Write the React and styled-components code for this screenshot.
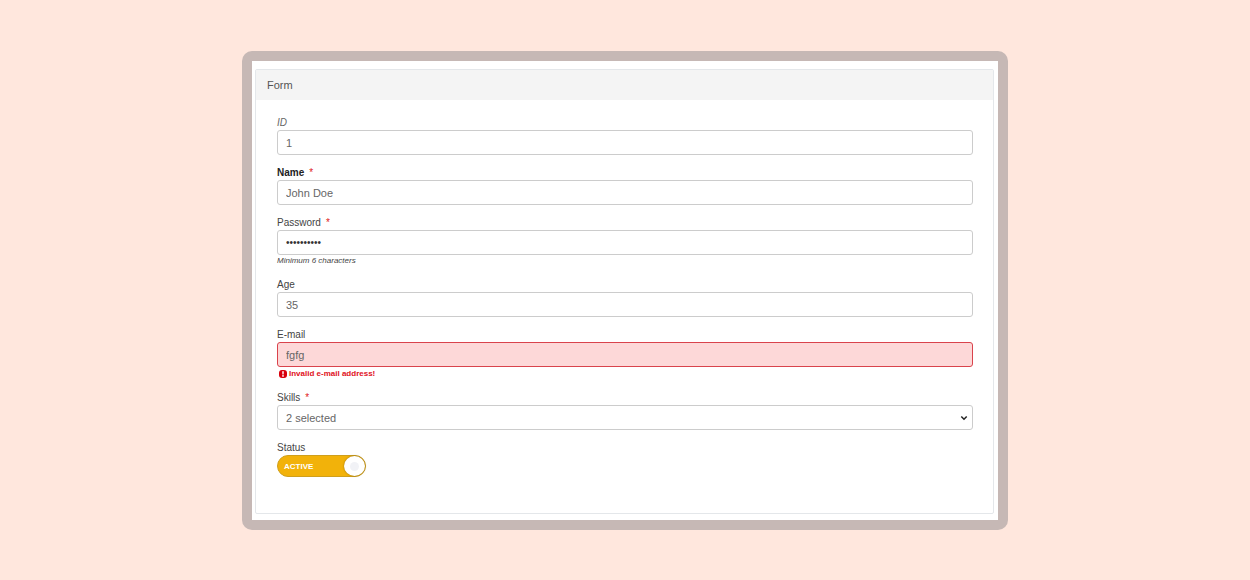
import React, { useState } from "react";
import styled, { createGlobalStyle, css } from "styled-components";

const GlobalStyle = createGlobalStyle`
  * {
    box-sizing: border-box;
  }

  body {
    margin: 0;
    background-color: #ffe7dd;
    font-family: "Liberation Sans", Arial, sans-serif;
    color: #555;
  }
`;

const Page = styled.main`
  min-height: 100vh;
  padding: 51px 20px 50px;
`;

const Frame = styled.div`
  max-width: 766px;
  margin: 0 auto;
  border-radius: 10px;
  padding: 10px;
  background-color: #c6b8b5;
`;

const Sheet = styled.div`
  padding: 8px 4px 6px 3px;
  background-color: #fff;
`;

const Panel = styled.section`
  border: 1px solid #e4e7ea;
  border-radius: 2px;
`;

const PanelTitle = styled.h1`
  margin: 0;
  padding: 0 11px;
  font-size: 11px;
  font-weight: 400;
  line-height: 30px;
  background-color: #f4f4f4;
`;

const FormBody = styled.form`
  padding: 16px 20px 36px 21px;
`;

const Field = styled.div`
  margin-bottom: 11px;

  &:last-child {
    margin-bottom: 0;
  }
`;

const Label = styled.label`
  display: block;
  width: fit-content;
  font-size: 10px;
  line-height: 14px;
  color: ${({ $strong, $italic }) =>
    $strong ? "#222" : $italic ? "#666" : "#444"};
  font-weight: ${({ $strong }) => ($strong ? 700 : 400)};
  font-style: ${({ $italic }) => ($italic ? "italic" : "normal")};
`;

const Required = styled.span`
  margin-left: 5px;
  font-weight: 400;
  color: #e02020;
`;

const control = css`
  display: block;
  width: 100%;
  height: 25px;
  border: 1px solid #ccc;
  border-radius: 3px;
  padding: 0 8px;
  outline: none;
  font-family: inherit;
  font-size: 11px;
  color: #666;
  background-color: #fff;
`;

const Input = styled.input`
  ${control}

  ${({ $invalid }) =>
    $invalid &&
    css`
      border-color: #d9434c;
      background-color: #fdd8d8;
    `}

  &[type="password"] {
    font-size: 10px;
    color: #333;
  }
`;

const SelectWrapper = styled.div`
  display: grid;
  align-items: center;

  select,
  svg {
    grid-area: 1 / 1;
  }

  svg {
    justify-self: end;
    margin-right: 5px;
    pointer-events: none;
  }
`;

const Select = styled.select`
  ${control}
  appearance: none;
`;

const Hint = styled.p`
  margin: 0;
  font-size: 8px;
  font-style: italic;
  line-height: 12px;
  color: #444;
`;

const ErrorText = styled.p`
  display: flex;
  align-items: center;
  gap: 2px;
  margin: 0;
  padding-left: 2px;
  font-size: 8px;
  font-weight: 700;
  line-height: 13px;
  color: #e0101c;
`;

const Toggle = styled.button`
  display: flex;
  flex-direction: ${({ $on }) => ($on ? "row" : "row-reverse")};
  align-items: center;
  justify-content: space-between;
  width: 89px;
  height: 22px;
  border: 1px solid #cf9f1c;
  border-radius: 11px;
  padding: 0;
  cursor: pointer;
  background-color: ${({ $on }) => ($on ? "#f2b20a" : "#bbb")};
`;

const ToggleText = styled.span`
  padding: 0 6px;
  font-family: "Liberation Sans", Arial, sans-serif;
  font-size: 8px;
  font-weight: 700;
  color: #fff;
`;

const Knob = styled.span`
  display: grid;
  place-items: center;
  width: 21px;
  height: 20px;
  border-radius: 50%;
  background-color: #fff;
  box-shadow: 0 0 2px rgba(0, 0, 0, 0.4);

  &::after {
    content: "";
    width: 9px;
    height: 9px;
    border-radius: 50%;
    background-color: #f1f2f6;
  }
`;

function AlertIcon() {
  return (
    <svg width="8" height="8" viewBox="0 0 8 8" aria-hidden="true">
      <rect width="8" height="8" rx="3" fill="#d8000c" />
      <path d="M3.2 1.2h1.6l-.2 3.2H3.4z" fill="#fff" />
      <circle cx="4" cy="5.9" r=".9" fill="#fff" />
    </svg>
  );
}

function Chevron() {
  return (
    <svg width="8" height="6" viewBox="0 0 8 6" aria-hidden="true">
      <path d="M1.3 1.5L4 4.2l2.7-2.7" fill="none" stroke="#222" strokeWidth="1.5" />
    </svg>
  );
}

function App() {
  const [active, setActive] = useState(true);

  return (
    <Page>
      <GlobalStyle />
      <Frame>
        <Sheet>
          <Panel>
            <PanelTitle>Form</PanelTitle>
            <FormBody onSubmit={(e) => e.preventDefault()}>
              <Field>
                <Label htmlFor="id" $italic>
                  ID
                </Label>
                <Input id="id" defaultValue="1" />
              </Field>
              <Field>
                <Label htmlFor="name" $strong>
                  Name<Required>*</Required>
                </Label>
                <Input id="name" defaultValue="John Doe" />
              </Field>
              <Field>
                <Label htmlFor="password">
                  Password<Required>*</Required>
                </Label>
                <Input id="password" type="password" defaultValue="abcdefghij" />
                <Hint>Minimum 6 characters</Hint>
              </Field>
              <Field>
                <Label htmlFor="age">Age</Label>
                <Input id="age" defaultValue="35" />
              </Field>
              <Field>
                <Label htmlFor="email">E-mail</Label>
                <Input id="email" defaultValue="fgfg" $invalid />
                <ErrorText>
                  <AlertIcon />
                  Invalid e-mail address!
                </ErrorText>
              </Field>
              <Field>
                <Label htmlFor="skills">
                  Skills<Required>*</Required>
                </Label>
                <SelectWrapper>
                  <Select id="skills">
                    <option>2 selected</option>
                  </Select>
                  <Chevron />
                </SelectWrapper>
              </Field>
              <Field>
                <Label htmlFor="status">Status</Label>
                <Toggle
                  id="status"
                  type="button"
                  role="switch"
                  aria-checked={active}
                  $on={active}
                  onClick={() => setActive(!active)}
                >
                  <ToggleText>{active ? "ACTIVE" : "INACTIVE"}</ToggleText>
                  <Knob />
                </Toggle>
              </Field>
            </FormBody>
          </Panel>
        </Sheet>
      </Frame>
    </Page>
  );
}

export default App;
